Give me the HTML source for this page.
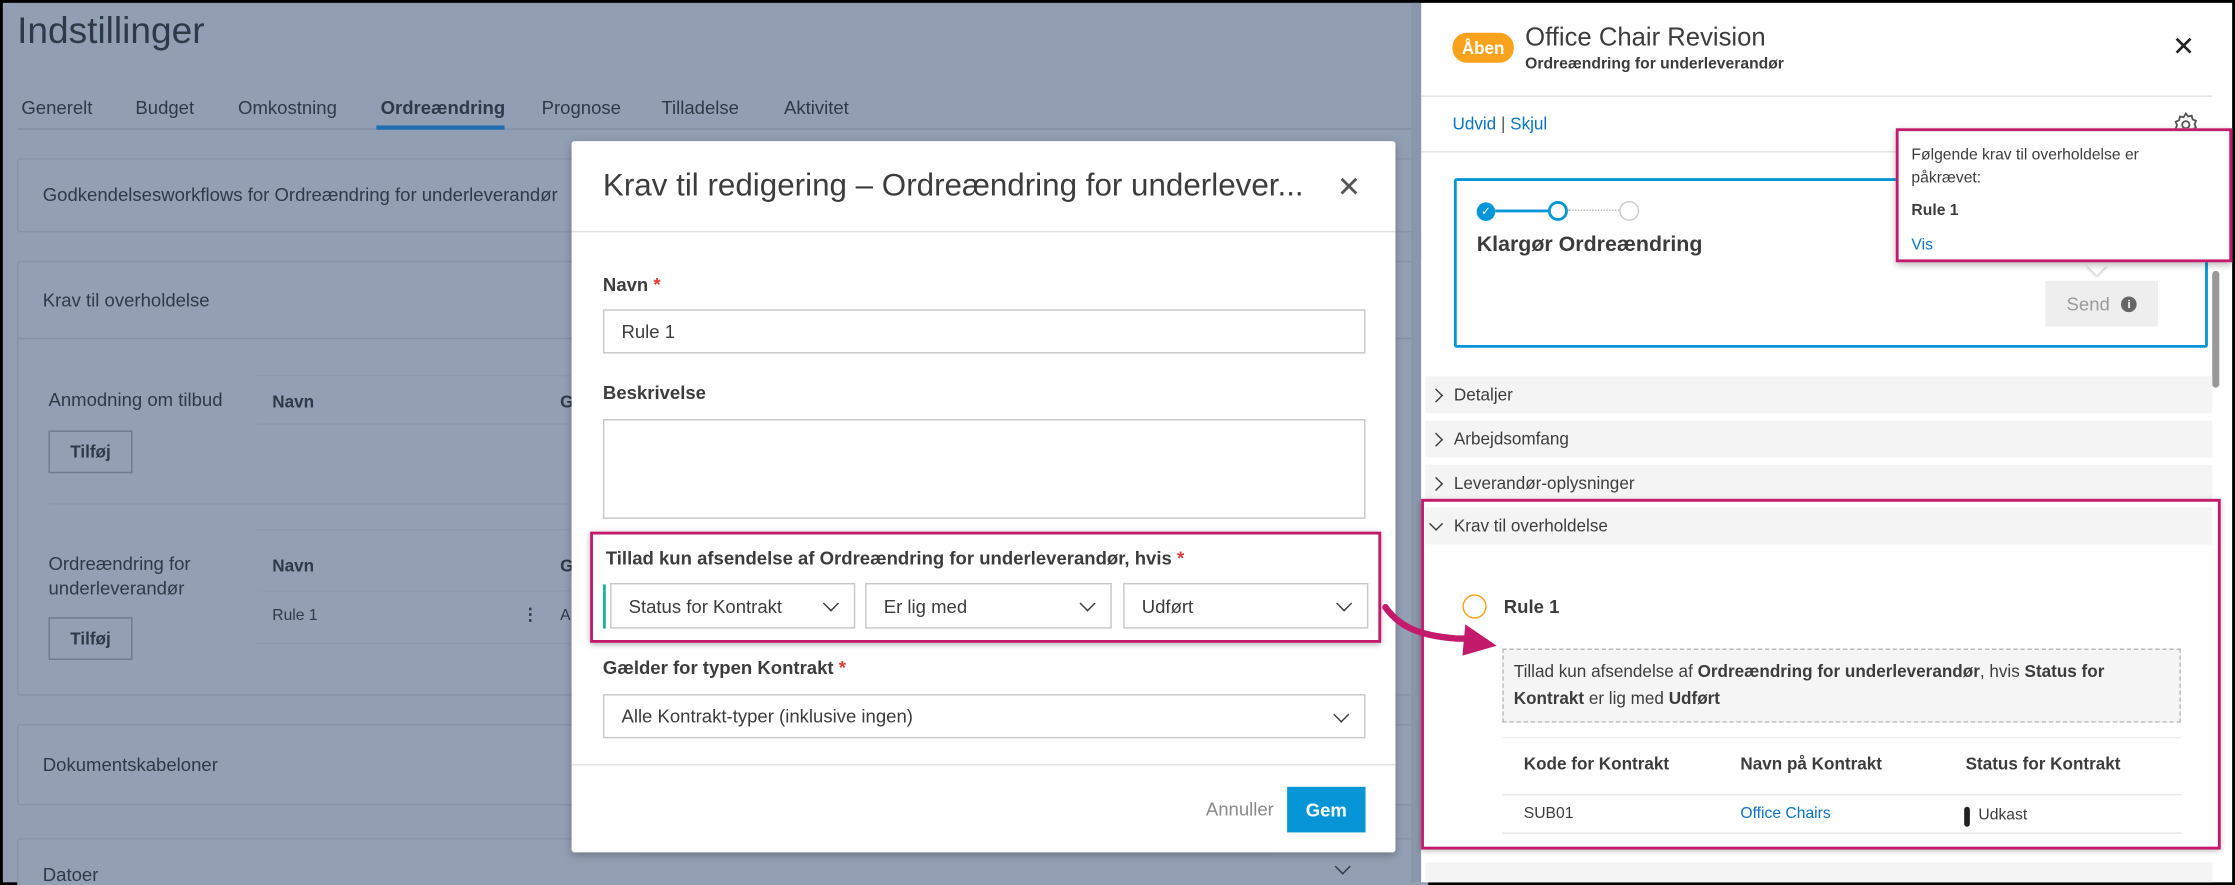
<!DOCTYPE html>
<html><head><meta charset="utf-8">
<style>
*{box-sizing:border-box;margin:0;padding:0}
html,body{width:2235px;height:885px;overflow:hidden;background:#000}
#s{position:absolute;left:0;top:0;width:1568px;height:621px;transform:scale(1.42538);transform-origin:0 0;font-family:"Liberation Sans",sans-serif;color:#3c3c3c;overflow:hidden}
.a{position:absolute}
.bg{left:2px;top:2px;width:992px;height:617px;background:#929fb2}
.t{color:#2f3a48}
.card{background:#93a0b3;border:1px solid #8793a6;border-radius:2px}
.lbl{font-size:13px;font-weight:bold;color:#3c3c3c}
.inp{background:#fff;border:1px solid #c8c8c8;font-size:13px;color:#3c3c3c;padding-left:12px;display:flex;align-items:center}
.chev{position:absolute;right:12px;top:50%;width:8px;height:8px;border-right:1.6px solid #3c3c3c;border-bottom:1.6px solid #3c3c3c;transform:translateY(-70%) rotate(45deg)}
.mag{border:2px solid #c41a6b}
.acc{left:1000px;width:552px;height:26px;background:#f4f4f4;font-size:12px;color:#3c3c3c;display:flex;align-items:center;padding-left:20px}
.acc:before{content:"";position:absolute;left:4px;top:10px;width:6px;height:6px;border-right:1.4px solid #3c3c3c;border-bottom:1.4px solid #3c3c3c;transform:rotate(-45deg)}
.acc.open:before{transform:rotate(45deg);top:8px}
.btn{border:1px solid #6f7b8c;font-size:12px;font-weight:bold;color:#2f3a48;display:flex;align-items:center;justify-content:center}
</style></head><body><div id="s">
<div class="a bg"></div>
<div class="a t" style="left:12px;top:6px;font-size:26px">Indstillinger</div>
<div class="a t" style="left:15px;top:68px;font-size:13px;word-spacing:0">
<span style="position:absolute;left:0">Generelt</span><span style="position:absolute;left:80px">Budget</span><span style="position:absolute;left:152px">Omkostning</span><span style="position:absolute;left:252px;font-weight:bold;white-space:nowrap">Ordreændring</span><span style="position:absolute;left:365px">Prognose</span><span style="position:absolute;left:449px">Tilladelse</span><span style="position:absolute;left:535px">Aktivitet</span></div>
<div class="a" style="left:12px;top:90px;width:980px;height:1px;background:#8390a3"></div>
<div class="a" style="left:264px;top:88px;width:90px;height:3px;background:#1f6fb3"></div>
<div class="a card" style="left:12px;top:111px;width:990px;height:52px"></div>
<div class="a t" style="left:30px;top:129px;font-size:13px">Godkendelsesworkflows for Ordreændring for underleverandør</div>
<div class="a card" style="left:12px;top:183px;width:990px;height:305px"></div>
<div class="a" style="left:12px;top:237px;width:990px;height:1px;background:#8390a3"></div>
<div class="a t" style="left:30px;top:203px;font-size:13px">Krav til overholdelse</div>
<div class="a" style="left:180px;top:263px;width:220px;height:1px;background:#8c99ac"></div>
<div class="a t" style="left:34px;top:273px;font-size:13px">Anmodning om tilbud</div>
<div class="a t" style="left:191px;top:275px;font-size:12px;font-weight:bold">Navn</div>
<div class="a t" style="left:393px;top:275px;font-size:12px;font-weight:bold">G</div>
<div class="a" style="left:180px;top:297px;width:220px;height:1px;background:#8c99ac"></div>
<div class="a btn" style="left:34px;top:302px;width:59px;height:30px">Tilføj</div>
<div class="a" style="left:34px;top:353px;width:366px;height:1px;background:#8c99ac"></div>
<div class="a" style="left:180px;top:371px;width:220px;height:1px;background:#8c99ac"></div>
<div class="a t" style="left:34px;top:387px;font-size:13px;line-height:17px">Ordreændring for<br>underleverandør</div>
<div class="a t" style="left:191px;top:390px;font-size:12px;font-weight:bold">Navn</div>
<div class="a t" style="left:393px;top:390px;font-size:12px;font-weight:bold">G</div>
<div class="a" style="left:180px;top:414px;width:220px;height:1px;background:#8c99ac"></div>
<div class="a t" style="left:191px;top:426px;font-size:11px">Rule 1</div>
<div class="a t" style="left:366px;top:424px;font-size:12px;font-weight:bold">⋮</div>
<div class="a t" style="left:393px;top:426px;font-size:11px">A</div>
<div class="a" style="left:180px;top:451px;width:220px;height:1px;background:#8c99ac"></div>
<div class="a btn" style="left:34px;top:433px;width:59px;height:30px">Tilføj</div>
<div class="a card" style="left:12px;top:508px;width:990px;height:57px"></div>
<div class="a t" style="left:30px;top:529px;font-size:13px">Dokumentskabeloner</div>
<div class="a card" style="left:12px;top:588px;width:990px;height:50px"></div>
<div class="a t" style="left:30px;top:606px;font-size:13px">Datoer</div>
<div class="a" style="left:938px;top:604px;width:8px;height:8px;border-right:1.5px solid #2f3a48;border-bottom:1.5px solid #2f3a48;transform:rotate(45deg)"></div>

<!-- modal -->
<div class="a" style="left:401px;top:99px;width:578px;height:499px;background:#fff;border-radius:2px;box-shadow:0 2px 6px rgba(0,0,0,.25)"></div>
<div class="a" style="left:423px;top:117px;font-size:22px;color:#3c3c3c;white-space:nowrap">Krav til redigering – Ordreændring for underlever...</div>
<div class="a" style="left:938px;top:119px;font-size:20px;color:#555">✕</div>
<div class="a" style="left:401px;top:162px;width:578px;height:1px;background:#e2e2e2"></div>
<div class="a lbl" style="left:423px;top:192px">Navn <span style="color:#e53935">*</span></div>
<div class="a inp" style="left:423px;top:217px;width:535px;height:31px">Rule 1</div>
<div class="a lbl" style="left:423px;top:268px">Beskrivelse</div>
<div class="a inp" style="left:423px;top:294px;width:535px;height:70px"></div>
<div class="a mag" style="left:414px;top:373px;width:555px;height:78px;box-shadow:0 1px 4px rgba(0,0,0,.3)"></div>
<div class="a lbl" style="left:425px;top:384px;white-space:nowrap">Tillad kun afsendelse af Ordreændring for underleverandør, hvis <span style="color:#e53935">*</span></div>
<div class="a" style="left:423px;top:410px;width:2px;height:31px;background:#1fb39a"></div>
<div class="a inp" style="left:428px;top:409px;width:172px;height:32px">Status for Kontrakt<i class="chev"></i></div>
<div class="a inp" style="left:607px;top:409px;width:173px;height:32px">Er lig med<i class="chev"></i></div>
<div class="a inp" style="left:788px;top:409px;width:172px;height:32px">Udført<i class="chev"></i></div>
<div class="a lbl" style="left:423px;top:461px">Gælder for typen Kontrakt <span style="color:#e53935">*</span></div>
<div class="a inp" style="left:423px;top:487px;width:535px;height:31px">Alle Kontrakt-typer (inklusive ingen)<i class="chev"></i></div>
<div class="a" style="left:401px;top:536px;width:578px;height:1px;background:#e2e2e2"></div>
<div class="a" style="left:846px;top:560px;font-size:13px;color:#8a8a8a">Annuller</div>
<div class="a" style="left:903px;top:552px;width:55px;height:32px;background:#0696d7;color:#fff;font-size:13px;font-weight:bold;display:flex;align-items:center;justify-content:center">Gem</div>

<!-- right panel -->
<div class="a" style="left:990px;top:2px;width:7px;height:617px;background:#8a97aa"></div>
<div class="a" style="left:997px;top:2px;width:569px;height:617px;background:#fff"></div>
<div class="a" style="left:1019px;top:23px;width:43px;height:21px;border-radius:10px;background:#f9a21b;color:#fff;font-size:12px;font-weight:bold;display:flex;align-items:center;justify-content:center">Åben</div>
<div class="a" style="left:1070px;top:16px;font-size:18px;color:#3c3c3c">Office Chair Revision</div>
<div class="a" style="left:1070px;top:39px;font-size:11px;font-weight:bold;color:#3c3c3c">Ordreændring for underleverandør</div>
<div class="a" style="left:1524px;top:22px;font-size:19px;color:#222">✕</div>
<div class="a" style="left:997px;top:67px;width:555px;height:1px;background:#e2e2e2"></div>
<div class="a" style="left:1019px;top:80px;font-size:12px;color:#0a74c4">Udvid <span style="color:#555">|</span> Skjul</div>
<svg class="a" style="left:1524px;top:78px" width="19" height="19" viewBox="0 0 24 24" fill="none" stroke="#555" stroke-width="1.6"><circle cx="12" cy="12" r="3.2"/><path d="M12 2l2 2.6 3.2-.6.8 3.2 3 1.4-1.2 3 1.2 3-3 1.4-.8 3.2-3.2-.6L12 22l-2-2.6-3.2.6-.8-3.2-3-1.4 1.2-3-1.2-3 3-1.4.8-3.2 3.2.6z"/></svg>
<div class="a" style="left:997px;top:106px;width:555px;height:1px;background:#e2e2e2"></div>
<div class="a" style="left:1020px;top:125px;width:529px;height:119px;border:2px solid #0696d7;border-radius:2px"></div>
<div class="a" style="left:1036px;top:142px;width:13px;height:13px;border-radius:50%;background:#0696d7;color:#fff;font-size:8px;text-align:center;line-height:13px">✓</div>
<div class="a" style="left:1049px;top:147px;width:38px;height:2px;background:#0696d7"></div>
<div class="a" style="left:1086px;top:141px;width:14px;height:14px;border-radius:50%;border:2px solid #0696d7"></div>
<div class="a" style="left:1100px;top:147px;width:36px;border-top:1.5px dotted #bbb"></div>
<div class="a" style="left:1136px;top:141px;width:14px;height:14px;border-radius:50%;border:1.5px solid #ccc"></div>
<div class="a" style="left:1036px;top:163px;font-size:15px;font-weight:bold;color:#3c3c3c">Klargør Ordreændring</div>
<div class="a" style="left:1435px;top:197px;width:79px;height:32px;background:#eee;color:#9a9a9a;font-size:13px;display:flex;align-items:center;justify-content:center">Send <span style="display:inline-block;width:11px;height:11px;border-radius:50%;background:#666;color:#fff;font-size:8px;line-height:11px;text-align:center;margin-left:8px;font-weight:bold">i</span></div>
<div class="a" style="left:1466px;top:181px;width:10px;height:10px;background:#fff;transform:rotate(45deg);box-shadow:1px 1px 2px rgba(0,0,0,.2)"></div>
<div class="a mag" style="left:1330px;top:90px;width:236px;height:94px;background:#fff;box-shadow:0 2px 5px rgba(0,0,0,.3)"></div>
<div class="a" style="left:1341px;top:101px;font-size:11px;line-height:16px;color:#3c3c3c;width:210px">Følgende krav til overholdelse er påkrævet:</div>
<div class="a" style="left:1341px;top:142px;font-size:11px;color:#3c3c3c;font-weight:bold">Rule 1</div>
<div class="a" style="left:1341px;top:166px;font-size:11px;color:#0a74c4">Vis</div>
<div class="a" style="left:1552px;top:190px;width:5px;height:82px;border-radius:3px;background:#999"></div>
<div class="a acc" style="top:264px">Detaljer</div>
<div class="a acc" style="top:295px">Arbejdsomfang</div>
<div class="a acc" style="top:326px">Leverandør-oplysninger</div>
<div class="a acc open" style="top:356px">Krav til overholdelse</div>
<div class="a mag" style="left:997px;top:350px;width:561px;height:246px;box-shadow:0 1px 4px rgba(0,0,0,.3)"></div>
<div class="a" style="left:1026px;top:417px;width:17px;height:17px;border-radius:50%;border:1.6px solid #f9a21b"></div>
<div class="a" style="left:1055px;top:418px;font-size:13px;font-weight:bold;color:#3c3c3c">Rule 1</div>
<div class="a" style="left:1054px;top:455px;width:476px;height:52px;border:1px dashed #bbb;background:#f5f5f5"></div>
<div class="a" style="left:1062px;top:462px;width:460px;font-size:12px;line-height:19px;color:#3c3c3c">Tillad kun afsendelse af <b>Ordreændring for underleverandør</b>, hvis <b>Status for Kontrakt</b> er lig med <b>Udført</b></div>
<div class="a" style="left:1054px;top:517px;width:476px;height:1px;background:#eee"></div>
<div class="a" style="left:1069px;top:529px;font-size:12px;font-weight:bold;color:#3c3c3c">Kode for Kontrakt</div>
<div class="a" style="left:1221px;top:529px;font-size:12px;font-weight:bold;color:#3c3c3c">Navn på Kontrakt</div>
<div class="a" style="left:1379px;top:529px;font-size:12px;font-weight:bold;color:#3c3c3c">Status for Kontrakt</div>
<div class="a" style="left:1054px;top:557px;width:476px;height:1px;background:#e6e6e6"></div>
<div class="a" style="left:1069px;top:565px;font-size:11px;color:#3c3c3c">SUB01</div>
<div class="a" style="left:1221px;top:565px;font-size:11px;color:#0a74c4">Office Chairs</div>
<div class="a" style="left:1378px;top:566px;width:4px;height:14px;border-radius:2px;background:#222"></div>
<div class="a" style="left:1388px;top:566px;font-size:11px;color:#3c3c3c">Udkast</div>
<div class="a" style="left:1054px;top:584px;width:476px;height:1px;background:#e6e6e6"></div>
<div class="a" style="left:1000px;top:605px;width:552px;height:14px;background:#f4f4f4"></div>
<svg class="a" style="left:960px;top:410px" width="110" height="60"><path d="M12 16 C22 30 36 36 62 38 L74 38" fill="none" stroke="#c41a6b" stroke-width="4.5" stroke-linecap="round"/><path d="M68 28 L90 43 L66 50 Z" fill="#c41a6b"/></svg>
</div></body></html>
